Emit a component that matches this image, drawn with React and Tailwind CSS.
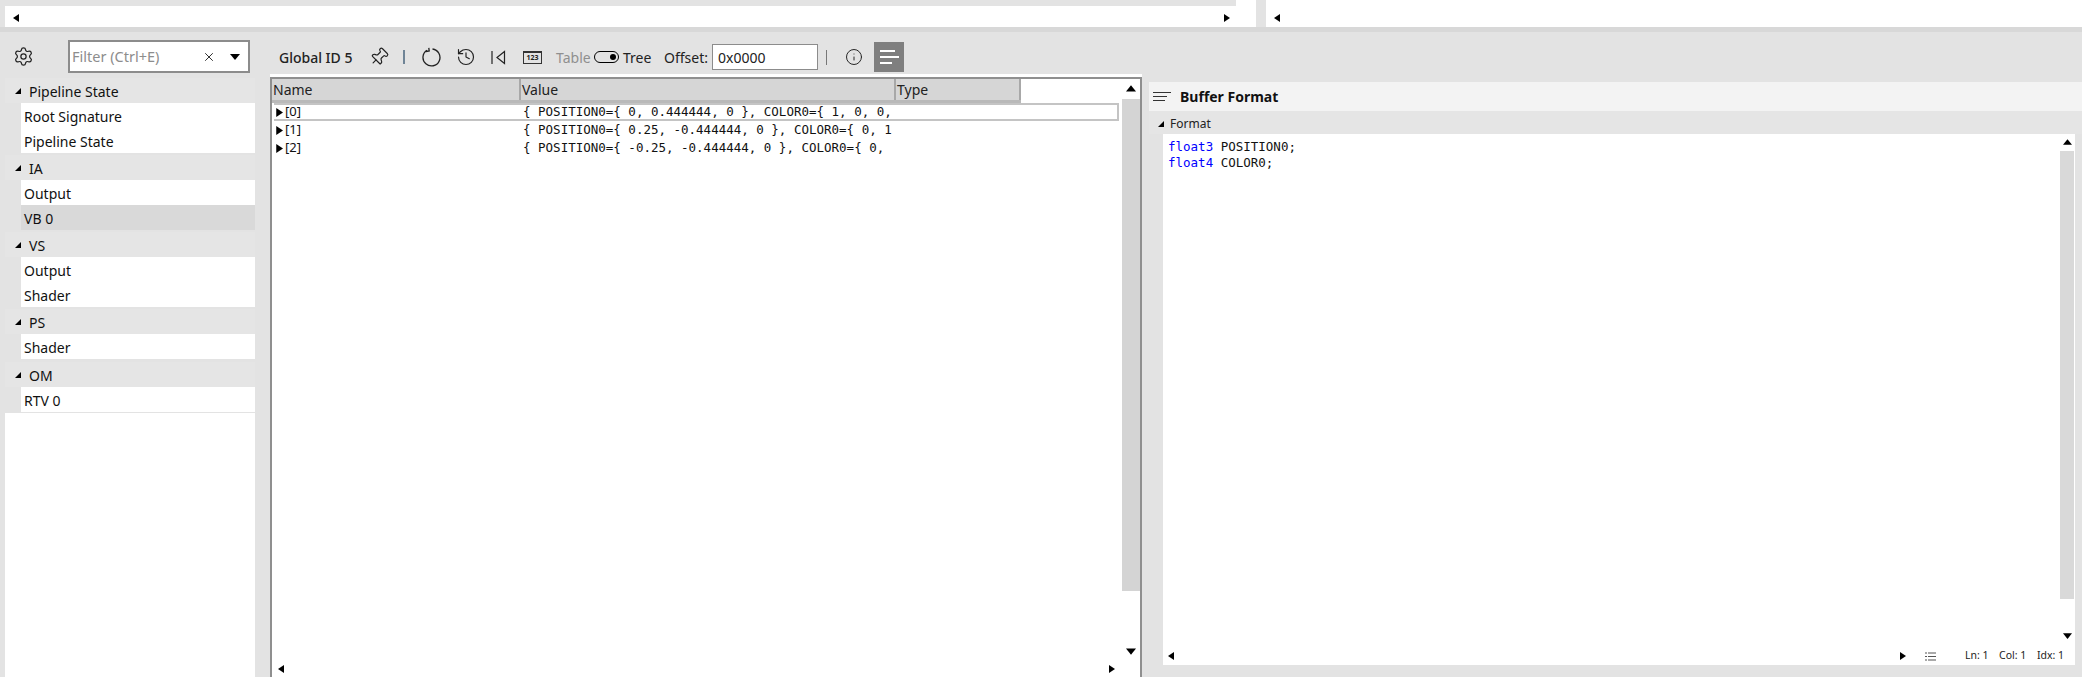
import React from 'react';
import { Settings, X, Pin, History, Info } from 'lucide-react';

const ui = { fontFamily: '"Noto Sans", "Open Sans", sans-serif' };
const mono = { fontFamily: '"DejaVu Sans Mono", "Liberation Mono", monospace' };

function Tri({ dir = 'right', size = 8, className = '' }) {
  const pts = {
    right: '2,0 8,4 2,8',
    left: '6,0 0,4 6,8',
    up: '0,6 4,1 8,6',
    down: '0,2 8,2 4,7',
    corner: '7,1 7,7 1,7',
  }[dir];
  return (
    <svg width={size} height={size} viewBox="0 0 8 8" className={'shrink-0 ' + className}>
      <polygon points={pts} fill="#000" />
    </svg>
  );
}

function Section({ title, items, gap = 'mb-[2px]' }) {
  return (
    <div className={gap}>
      <div className="h-[25px] bg-[#e5e5e5] flex items-center pl-[9px] pt-[1px] text-[14px] text-[#111]">
        <Tri dir="corner" />
        <span className="ml-[7px]">{title}</span>
      </div>
      <div className="pl-[16px]">
        {items.map((it) => (
          <div key={it} className={'h-[25px] flex items-center pl-[3px] pt-[1px] text-[14px] text-[#111] ' + (it === 'VB 0' ? 'bg-[#d9d9d9]' : 'bg-white')}>
            {it}
          </div>
        ))}
      </div>
    </div>
  );
}

const sections = [
  { title: 'Pipeline State', items: ['Root Signature', 'Pipeline State'] },
  { title: 'IA', items: ['Output', 'VB 0'] },
  { title: 'VS', items: ['Output', 'Shader'] },
  { title: 'PS', items: ['Shader'], gap: 'mb-[3px]' },
  { title: 'OM', items: ['RTV 0'] },
];

const rows = [
  { name: '[0]', value: '{ POSITION0={ 0, 0.444444, 0 }, COLOR0={ 1, 0, 0,' },
  { name: '[1]', value: '{ POSITION0={ 0.25, -0.444444, 0 }, COLOR0={ 0, 1' },
  { name: '[2]', value: '{ POSITION0={ -0.25, -0.444444, 0 }, COLOR0={ 0,' },
];

function Sidebar() {
  return (
    <div className="w-[270px] shrink-0 flex flex-col">
      <div className="h-[46px] flex items-start">
        <Settings size={21} strokeWidth={1.4} className="ml-[13px] mt-[14px] text-[#222]" />
        <div className="ml-[34px] mt-[8px] w-[182px] h-[33px] border-2 border-[#8c8c8c] bg-white flex items-center pl-[2px] text-[14.5px] text-[#8d8d8d]">
          <span className="flex-1">Filter (Ctrl+E)</span>
          <X size={14} strokeWidth={1.6} className="text-[#222] mr-[14px]" />
          <svg width="10" height="6" viewBox="0 0 10 6" className="mr-[8px]">
            <polygon points="0,0 10,0 5,6" fill="#000" />
          </svg>
        </div>
      </div>
      <div className="ml-[5px] w-[250px] flex-1 flex flex-col">
        {sections.map((s) => <Section key={s.title} {...s} />)}
        <div className="flex-1 bg-white -mt-[1px]" />
      </div>
    </div>
  );
}

function Toolbar() {
  return (
    <div className="h-[42px] shrink-0 flex items-center pl-[9px] pt-[8px] text-[14px] text-[#222]">
      <span className="font-medium w-[75px] whitespace-nowrap">Global ID 5</span>
      <Pin size={20} strokeWidth={1.4} className="ml-[15px] rotate-45" />
      <div className="ml-[14px] w-[2px] h-[14px] bg-[#6f8496]" />
      <svg width="20" height="20" viewBox="0 0 20 20" className="ml-[17px]" fill="none" stroke="#222" strokeWidth="1.3">
        <path d="M10.500 2A8.500 8.500 0 1 1 5 3.200" />
        <path d="M6.800 0.800 7.200 4 4 4.500" />
      </svg>
      <History size={20} strokeWidth={1.4} className="ml-[14px]" />
      <svg width="16" height="15" viewBox="0 0 16 15" className="ml-[15px]" fill="none" stroke="#222" strokeWidth="1.2">
        <path d="M1 1v13M13.500 1.500 6 7.500l7.500 6z" />
      </svg>
      <div className="ml-[16px] w-[19px] h-[13px] border border-[#333] border-t-2 flex items-center justify-center text-[7px] font-bold leading-none">123</div>
      <span className="ml-[14px] text-[#8f8f8f] w-[34px]">Table</span>
      <div className="ml-[4px] w-[25px] h-[12px] rounded-full border-[1.5px] border-black flex items-center justify-end pr-[2px]">
        <div className="w-[6px] h-[6px] rounded-full bg-black" />
      </div>
      <span className="ml-[4px] w-[30px]">Tree</span>
      <span className="ml-[11px] w-[46px]">Offset:</span>
      <div className="ml-[2px] w-[106px] h-[26px] border border-[#8c8c8c] bg-white flex items-center pl-[5px]">0x0000</div>
      <div className="ml-[8px] w-[1px] h-[15px] bg-[#777]" />
      <Info size={18} strokeWidth={1.3} className="ml-[18px]" />
      <div className="ml-[11px] w-[30px] h-[30px] bg-[#7f7f7f] flex flex-col justify-center gap-[4px] pl-[6px]">
        <div className="w-[15px] h-[2px] bg-white" />
        <div className="w-[19px] h-[2px] bg-white" />
        <div className="w-[12px] h-[2px] bg-white" />
      </div>
    </div>
  );
}

function TablePanel() {
  return (
    <div className="flex-1 min-h-0 flex flex-col border-t-[3px] border-white">
      <div className="flex-1 min-h-0 flex flex-col bg-white border-t-2 border-l-2 border-r-2 border-[#8f8f8f]">
        <div className="flex-1 min-h-0 flex">
          <div className="flex-1 min-w-0">
            <div className="flex h-[24px] w-[749px] bg-[#d6d6d6] text-[14px] text-[#222] border-b-[3px] border-[#b9b9b9]">
              <div className="w-[249px] pl-[1px] border-r-2 border-[#a8a8a8] leading-[21px]">Name</div>
              <div className="w-[375px] pl-[1px] border-r-2 border-[#a8a8a8] leading-[21px]">Value</div>
              <div className="w-[125px] pl-[1px] border-r-2 border-[#a8a8a8] leading-[21px]">Type</div>
            </div>
            {rows.map((r, i) => (
              <div key={r.name} className={'h-[18px] flex items-center text-[#111] ' + (i === 0 ? 'ml-[2px] w-[845px] border-y-2 border-r-2 border-[#c4c4c4]' : '')}>
                <div className={'flex items-center text-[13px] ' + (i === 0 ? 'w-[247px]' : 'w-[249px] pl-[2px]')}>
                  <Tri dir="right" size={9} />
                  <span className="ml-[2px]">{r.name}</span>
                </div>
                <div className="w-[374px] pl-[2px] text-[12.5px] whitespace-pre overflow-hidden" style={mono}>{r.value}</div>
              </div>
            ))}
          </div>
          <div className="w-[18px] shrink-0 flex flex-col items-center">
            <div className="h-[20px] flex items-center"><Tri dir="up" size={10} /></div>
            <div className="w-full h-[492px] bg-[#d4d4d4]" />
            <div className="flex-1 flex items-end pb-[4px]"><Tri dir="down" size={10} /></div>
          </div>
        </div>
        <div className="h-[17px] shrink-0 flex items-center pl-[6px]">
          <Tri dir="left" size={8} />
          <div className="w-[821px]" />
          <Tri dir="right" size={8} />
        </div>
      </div>
    </div>
  );
}

function FormatPanel() {
  return (
    <div className="w-[940px] shrink-0 flex flex-col pt-[50px] pl-[7px] pb-[12px]">
      <div className="h-[29px] shrink-0 bg-[#f3f3f3] flex items-center pl-[4px]">
        <div className="w-[19px] flex flex-col gap-[3px]">
          <div className="w-[18px] h-[1px] bg-[#333]" />
          <div className="w-[14px] h-[1px] bg-[#333]" />
          <div className="w-[12px] h-[1px] bg-[#333]" />
        </div>
        <span className="ml-[8px] text-[14px] font-bold text-[#111]">Buffer Format</span>
      </div>
      <div className="h-[23px] shrink-0 bg-[#e5e5e5] flex items-center pl-[8px] pt-[2px] text-[12px] text-[#222]">
        <Tri dir="corner" />
        <span className="ml-[5px]">Format</span>
      </div>
      <div className="flex-1 min-h-0 ml-[14px] mr-[7px] bg-white flex flex-col">
        <div className="flex-1 min-h-0 flex">
          <div className="flex-1 pt-[5px] pl-[5px] text-[12.5px] leading-[16px] text-[#111] whitespace-pre" style={mono}>
            <div><span className="text-[#0000ff]">float3</span> POSITION0;</div>
            <div><span className="text-[#0000ff]">float4</span> COLOR0;</div>
          </div>
          <div className="w-[14px] mr-[1px] shrink-0 flex flex-col items-center">
            <div className="h-[17px] flex items-center"><Tri dir="up" size={9} /></div>
            <div className="w-full h-[448px] bg-[#d9d9d9]" />
            <div className="flex-1 flex items-end pb-[5px]"><Tri dir="down" size={9} /></div>
          </div>
        </div>
        <div className="h-[20px] shrink-0 flex items-center pl-[5px] pt-[2px] text-[10.5px] text-[#222]">
          <Tri dir="left" size={8} />
          <div className="w-[722px]" />
          <Tri dir="right" size={8} />
          <svg width="11" height="9" viewBox="0 0 11 9" className="ml-[19px]" stroke="#555" strokeWidth="1">
            <path d="M0 1h2M3 1h8M0 4.500h2M3 4.500h8M0 8h2M3 8h8" />
          </svg>
          <span className="ml-[29px] w-[34px]">Ln: 1</span>
          <span className="w-[38px]">Col: 1</span>
          <span>Idx: 1</span>
        </div>
      </div>
    </div>
  );
}

export default function App() {
  return (
    <div className="w-[2082px] h-[677px] bg-[#e3e3e3] overflow-hidden flex flex-col" style={ui}>
      <div className="h-[27px] shrink-0 flex">
        <div className="ml-[5px] w-[1251px] bg-white flex flex-col">
          <div className="h-[6px] w-[1231px] bg-[#e3e3e3]" />
          <div className="flex-1 flex items-center pl-[8px] pt-[2px]">
            <Tri dir="left" size={8} />
            <div className="w-[1201px]" />
            <Tri dir="right" size={8} />
          </div>
        </div>
        <div className="ml-[10px] flex-1 bg-white flex items-center pl-[8px] pt-[8px]">
          <Tri dir="left" size={8} />
        </div>
      </div>
      <div className="h-[5px] shrink-0 bg-[#d8d8d8]" />
      <div className="flex-1 min-h-0 flex">
        <Sidebar />
        <div className="w-[872px] shrink-0 flex flex-col">
          <Toolbar />
          <TablePanel />
        </div>
        <FormatPanel />
      </div>
    </div>
  );
}
